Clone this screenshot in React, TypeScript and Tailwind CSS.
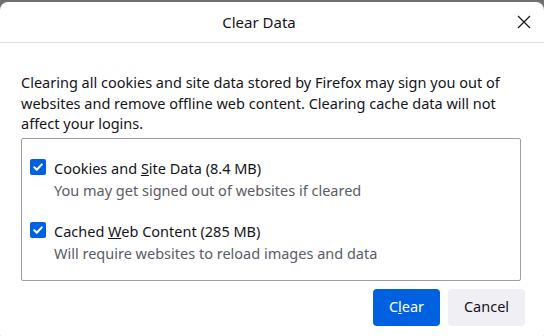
const font = { fontFamily: '"Noto Sans", "Open Sans", sans-serif' };

function Check() {
  return (
    <span className="mt-[1px] flex h-[16px] w-[16px] shrink-0 items-center justify-center rounded-[2px] bg-[#0061e0]">
      <svg width="12" height="12" viewBox="0 0 12 12" fill="none">
        <path d="M2.3 6.3 4.8 8.8 9.8 3.4" stroke="white" strokeWidth="2" strokeLinecap="round" strokeLinejoin="round" />
      </svg>
    </span>
  );
}

function Option({ label, hint }: { label: React.ReactNode; hint: string }) {
  return (
    <div className="flex gap-[8px]">
      <Check />
      <div className="flex flex-col">
        <span className="leading-[20px] text-[#15141a]">{label}</span>
        <span className="mt-[2px] leading-[20px] text-[#5b5b66]">{hint}</span>
      </div>
    </div>
  );
}

export default function App() {
  return (
    <div className="h-[336px] w-[544px] overflow-hidden bg-[#6f6f6f] pt-[2px] text-[14.5px]" style={font}>
      <div className="flex h-[340px] flex-col rounded-[8px] bg-white">
        <div className="flex h-[41px] items-center border-b border-[#e0e0e6]">
          <div className="flex-1 pl-[16px] text-center text-[15px] text-[#15141a]">Clear Data</div>
          <button className="mr-[8px] ml-[10px] flex h-[24px] w-[24px] items-center justify-center">
            <svg width="14" height="14" viewBox="0 0 14 14" fill="none">
              <path d="M1 1 13 13M13 1 1 13" stroke="#15141a" strokeWidth="1.2" />
            </svg>
          </button>
        </div>

        <div className="flex flex-col pl-[21px] pr-[23px] pt-[29px]">
          <p className="leading-[20.5px] text-[#15141a]">
            Clearing all cookies and site data stored by Firefox may sign you out of websites and remove offline web
            content. Clearing cache data will not affect your logins.
          </p>

          <div className="mt-[4px] flex h-[143px] flex-col gap-[21px] rounded-[2px] border border-[#9e9ea6] pl-[8px] pt-[19px]">
            <Option
              label={
                <>
                  Cookies and <u>S</u>ite Data (8.4 MB)
                </>
              }
              hint="You may get signed out of websites if cleared"
            />
            <Option
              label={
                <>
                  Cached <u>W</u>eb Content (285 MB)
                </>
              }
              hint="Will require websites to reload images and data"
            />
          </div>

          <div className="-mr-[4px] mt-[8px] flex justify-end gap-[8px]">
            <button className="h-[37px] w-[67px] rounded-[4px] bg-[#0061e0] text-white">
              C<u>l</u>ear
            </button>
            <button className="h-[37px] w-[77px] rounded-[4px] bg-[#f0f0f4] text-[#15141a]">Cancel</button>
          </div>
        </div>
      </div>
    </div>
  );
}
